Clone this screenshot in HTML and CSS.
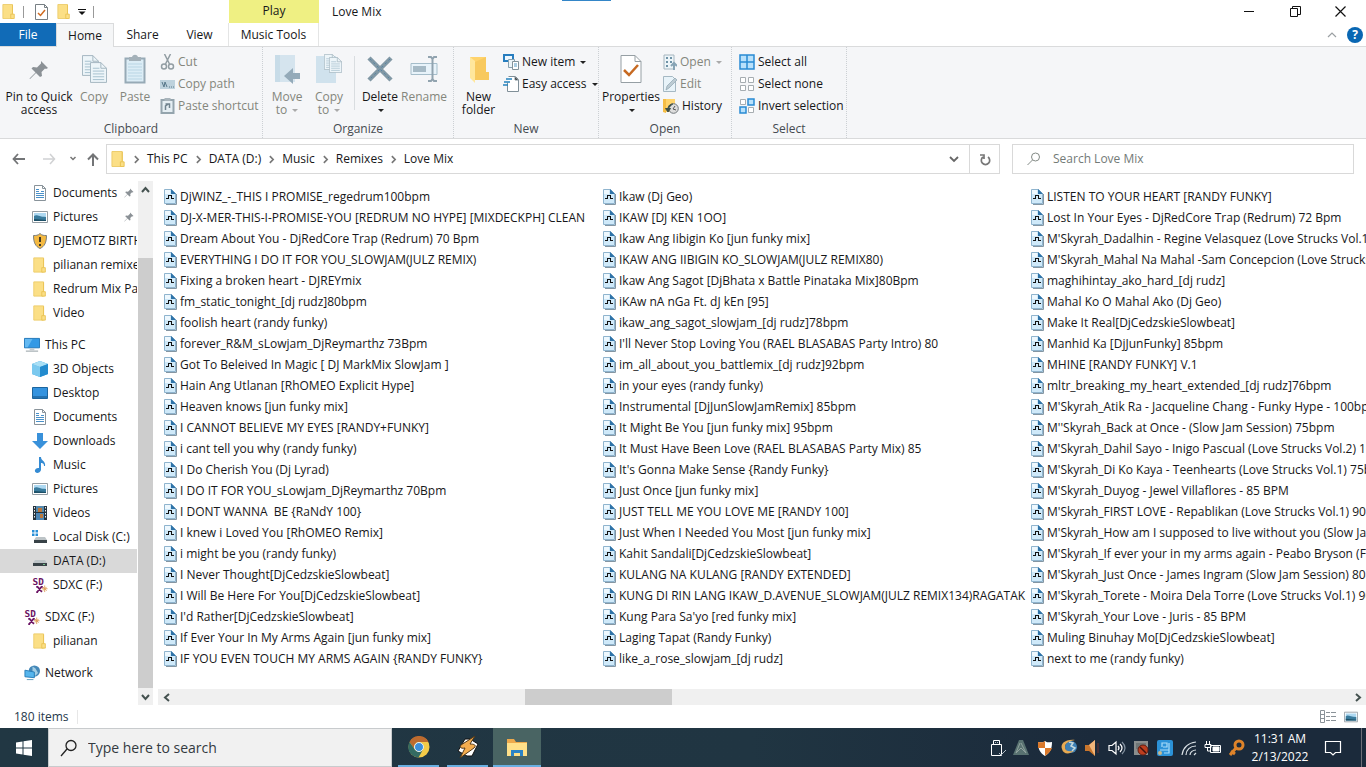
FILE: index.html
```html
<!DOCTYPE html>
<html lang="en">
<head>
<meta charset="utf-8">
<title>Love Mix</title>
<link rel="stylesheet" href="styles.css">
</head>
<body>
<svg class="defs" aria-hidden="true">
  <symbol id="folder" viewBox="0 0 16 18"><path d="M1 1h11v16H1z" fill="#fbdf86" stroke="#eccb69"/><path d="M10 12h4v5h-4z" fill="#fbdf86" stroke="#e9c252"/><path d="M12 1.5v10" stroke="#e9c252"/></symbol>
  <symbol id="file" viewBox="0 0 14 16"><path d="M3 15.500h10.500V5" fill="none" stroke="#8496a3"/><path d="M1.500.500h7l4 4v10h-11z" fill="#cfe9f9" stroke="#8fb4ce"/><path d="M2 1h5v4H2z" fill="#eef8fe"/><path d="M8 0l5 5H8z" fill="#2f73a8"/><path d="M3 9.500h3M5.500 9.500v-3M5 6.500h4M8.500 6.500v3M8 9.500h3" fill="none" stroke="#111"/></symbol>
  <symbol id="doc" viewBox="0 0 16 16"><path d="M2.500.5h8l3 3v12h-11z" fill="#fff" stroke="#89939a"/><path d="M10.500.5v3h3" fill="none" stroke="#89939a"/><path d="M4 4.500h3M4 6.500h3M4 8.500h8M4 10.500h8M4 12.500h8M9 6.500h3" stroke="#4a91c9"/></symbol>
  <symbol id="pic" viewBox="0 0 16 12"><path d="M.5.500h15v11H.5z" fill="#fff" stroke="#949da3"/><path d="M2 2h12v8H2z" fill="#aed9f2"/><path d="M2 5c3-2 5 1 12 1v4H2z" fill="#397b9d"/><path d="M2 8l12 1v1H2z" fill="#1d5067"/></symbol>
  <symbol id="pin" viewBox="0 0 20 20"><path d="M12 1l7 7-2 1-1-.5-3.500 3.500.5 4-2 1-4-4-6 6-.500-.500 6-6-4-4 1.500-1.500 4 .5 4-4z" fill="#8b9196"/></symbol>
  <symbol id="pc" viewBox="0 0 17 15"><path d="M.5.500h16v10H.5z" fill="#3399e5" stroke="#2176b8"/><path d="M1 1h8L4 10H1z" fill="#64b9f2"/><path d="M6 11h5v2H6z" fill="#c2cbd0"/><path d="M2 14h13" stroke="#8c979d"/></symbol>
  <symbol id="sd" viewBox="0 0 16 17"><text x="0" y="8" class="sd-mark">SD</text><path d="M5 10l5 6M10 10l-5 6M4 10.500h2M9 10.500h2M4 16h2" stroke="#6b1464" stroke-width="1.800"/><path d="M13 9v7M10 12.500h6M11 10.500l4 4M15 10.500l-4 4" stroke="#dd9d5b"/></symbol>
  <symbol id="drive" viewBox="0 0 16 12"><path d="M3 5h10l2 3H1z" fill="#bdc4c7"/><path d="M1 8h14v3H1z" fill="#384247"/><path d="M11 9.500h2" stroke="#74c08c"/></symbol>
  <symbol id="chev" viewBox="0 0 10 10"><path d="M3.500 2L6.500 5 3.500 8" fill="none" stroke="currentColor" stroke-width="1.500"/></symbol>
  <symbol id="sheet" viewBox="0 0 18 22"><path d="M.5.500h11l6 6v15H.5z" fill="#edf5f9" stroke="#a2b4be"/><path d="M11.500.5v6h6" fill="none" stroke="#a2b4be"/><path d="M3 6.500h7M3 9.500h12M3 12.500h12M3 15.500h12M3 18.500h12" stroke="#a4bfcd"/></symbol>
</svg>
<div class="app">
<header class="titlebar">
  <div class="quick">
    <svg width="14" height="17"><use href="#folder"/></svg><i class="bar"></i>
    <svg class="qa-check" width="13" height="16" viewBox="0 0 13 16"><path d="M.5.500h9l3 3v12H.5z" fill="#fff" stroke="#777f84"/><path d="M9.500.5v3h3" fill="none" stroke="#777f84"/><path d="M3 9l2.500 2.500L10 6" fill="none" stroke="#d06b20" stroke-width="1.500"/></svg>
    <svg class="qa-folder" width="14" height="17"><use href="#folder"/></svg>
    <svg width="8" height="6" viewBox="0 0 8 6"><path d="M0 .5h8" stroke="#111"/><path d="M.5 2.500h7L4 6z" fill="#111"/></svg><i class="bar"></i>
  </div>
  <div class="context">Play</div>
  <h1>Love Mix</h1>
  <i class="drag-line"></i>
  <div class="controls">
    <button aria-label="Minimize"><svg width="11" height="11"><path d="M0 5.500h10" stroke="#111"/></svg></button>
    <button aria-label="Restore"><svg width="11" height="11" fill="none" stroke="#111"><path d="M.5 2.500h7v8h-7zM2.500 2.500v-2h8v8h-3"/></svg></button>
    <button aria-label="Close"><svg width="11" height="11"><path d="M.5.500l10 10M10.500.5l-10 10" stroke="#111" stroke-width="1.200"/></svg></button>
  </div>
</header>
<nav class="tabs">
  <button class="file-tab">File</button><button class="active">Home</button><button>Share</button><button>View</button><button class="music">Music Tools</button>
  <div class="help"><svg width="10" height="6"><path d="M1 5l4-4 4 4" fill="none" stroke="#9ba0a3" stroke-width="1.200"/></svg><button class="help-button" aria-label="Help">?</button></div>
</nav>
<section class="ribbon">
  <div class="group clipboard"><div class="tools">
    <button class="big pin-button"><svg width="22" height="30" viewBox="-1 -6 22 30"><use href="#pin" width="20" height="20"/></svg>Pin to Quick<br>access</button>
    <button class="big off"><svg width="26" height="30"><use href="#sheet" x="1" y="1" width="17" height="21"/><use href="#sheet" x="9" y="8" width="17" height="21"/></svg>Copy</button>
    <button class="big off"><svg width="22" height="30" viewBox="0 0 22 30"><path d="M1.500 4.500h19v24h-19z" fill="#dcedf6" stroke="#97aab6" stroke-width="2"/><path d="M5 3h3c1-3 5-3 6 0h3v4H5z" fill="#a4b1b9"/><path d="M4 10h14M4 13h14M4 16h14M4 19h14M4 22h14M4 25h14" stroke="#b9d5e4"/></svg>Paste</button>
    <div class="smalls off">
      <button><svg width="14" height="16" viewBox="0 0 14 16" fill="none" stroke="#929da3" stroke-width="1.500"><path d="M4 0l5 10M10 0L5 10"/><circle cx="3.500" cy="12.500" r="2.500"/><circle cx="10.500" cy="12.500" r="2.500"/></svg>Cut</button>
      <button><svg width="15" height="9" viewBox="0 0 15 9"><path d="M0 0h15v9H0z" fill="#bed2dd"/><path d="M2 2l2 5 1-5 2 5M9 7h1M11 7h1M13 7h1" stroke="#58788a" fill="none"/></svg>Copy path</button>
      <button><svg width="14" height="16" viewBox="0 0 14 16"><path d="M1 2h12v13H1z" fill="#e5eef3" stroke="#94a4ad" stroke-width="2"/><path d="M4 0h6v3H4z" fill="#a8b4bb"/><path d="M5 12V8l3-2M5 6h4v4" stroke="#70838e" stroke-width="1.500" fill="none"/></svg>Paste shortcut</button>
    </div></div><h2>Clipboard</h2>
  </div>
  <div class="group organize"><div class="tools">
    <button class="big off"><svg width="28" height="30" viewBox="0 0 28 30"><path d="M2 1h20v27H2z" fill="#d5e4ee"/><path d="M2 1h5v27H2z" fill="#c8dce8"/><path d="M27 19h-7v-5l-9 8 9 8v-5h7z" fill="#94aab9"/></svg>Move<br>to <i class="caret"></i></button>
    <button class="big off"><svg width="28" height="30" viewBox="0 0 28 30"><path d="M1 2h20v27H1z" fill="#d0e2ed"/><use href="#sheet" x="9" y="0" width="13" height="16"/><use href="#sheet" x="14" y="3" width="13" height="16"/></svg>Copy<br>to <i class="caret"></i></button>
    <i class="divider"></i>
    <button class="big"><svg width="26" height="30"><path d="M2 4l22 22M24 4L2 26" stroke="#8198a5" stroke-width="4.500"/><path d="M3 5l20 20M23 5L3 25" stroke="#5583a5" stroke-dasharray="2 3"/></svg>Delete<br><i class="caret"></i></button>
    <button class="big off rename"><svg width="28" height="30" fill="none"><path d="M1 9.500h26v11H1z" fill="#e8f3fa" stroke="#a5bdca"/><path d="M3 12h13v6H3z" fill="#a6bac6"/><path d="M18 3h3l1.500 2L24 3h3M22.500 4v22M18 27h3l1.500-2 1.500 2h3" stroke="#91a3af" stroke-width="2"/></svg>Rename</button>
  </div><h2>Organize</h2></div>
  <div class="group new"><div class="tools">
    <button class="big"><svg width="22" height="30" viewBox="0 0 22 30"><path d="M2 3h16v21H2z" fill="#ffd36c"/><path d="M2 3l5 4v22l-5-5z" fill="#ffe79c"/><path d="M18 3v15h3v8H7V8z" fill="#f8c95e"/></svg>New<br>folder</button>
    <div class="smalls"><button><svg width="16" height="16" viewBox="0 0 16 16"><path d="M1 1h9v6H1z" fill="#edf8ff" stroke="#277dbf" stroke-width="2"/><path d="M5.500 5.500h6v8h-6z" fill="#edf5f9" stroke="#87a1af"/><path d="M9.500 7.500h6v8h-6z" fill="#fff" stroke="#839299"/><path d="M11 10h3M11 12h3" stroke="#579bc3"/></svg>New item<i class="caret"></i></button>
      <button><svg width="16" height="16" viewBox="0 0 16 16"><path d="M5.500.5h7l3 3v12h-11v-9" fill="#fff" stroke="#808f98"/><path d="M12 1v3h3" stroke="#808f98"/><path d="M3 3h6M1 6h6M0 9h5" stroke="#2482bd" stroke-width="1.500"/></svg>Easy access<i class="caret"></i></button></div>
  </div><h2>New</h2></div>
  <div class="group open"><div class="tools">
    <button class="big"><svg width="22" height="30" viewBox="0 0 22 30"><path d="M1 1.500h14l6 6v21H1z" fill="#fff" stroke="#969fa4"/><path d="M15 1.500v6h6" fill="none" stroke="#969fa4"/><path d="M4 16l5 5 9-10" fill="none" stroke="#c76a22" stroke-width="2.500"/></svg>Properties<br><i class="caret"></i></button>
    <div class="smalls"><button class="off"><svg width="14" height="16" viewBox="0 0 14 16"><path d="M1 1h10v14H1z" fill="#edf5f9" stroke="#a6b6bf"/><path d="M3 4h2M3 8h2M3 12h2M7 4h2M7 8h2" stroke="#6f93a7" stroke-width="2"/><path d="M11 16v-6M8 12l3-3 3 3" fill="none" stroke="#87a4b5" stroke-width="2"/></svg>Open<i class="caret"></i></button>
      <button class="off"><svg width="14" height="16" viewBox="0 0 14 16"><path d="M.5.500h9l3 3v12H.5z" fill="#e8f3f9" stroke="#a5b8c3"/><path d="M3 14l1-4 8-8 2 2-8 8z" fill="#bccbd3" stroke="#91a6b2" stroke-width=".7"/></svg>Edit</button>
      <button class="history"><svg width="16" height="16" viewBox="0 0 16 16"><path d="M0 1h12v13H0z" fill="#ffd36b"/><path d="M0 1h3v14l-3-1z" fill="#f5bd45"/><circle cx="10.500" cy="10.500" r="4.800" fill="#ddd" stroke="#71787c"/><path d="M12 8l-2 3 3 1" fill="none" stroke="#555"/><path d="M10 6c-4 0-5 3-5 5M2.500 10.500L5 14l2.500-3.500z" fill="#3f5048" stroke="#3f5048"/></svg>History</button></div>
  </div><h2>Open</h2></div>
  <div class="group select"><div class="smalls tools">
    <button><svg width="16" height="16"><path d="M1 1h14v14H1zM8 1v14M1 8h14" fill="#b9e1fb" stroke="#288bd3" stroke-width="1.500"/></svg>Select all</button>
    <button><svg width="16" height="16"><path d="M1.500 1.500h5v5h-5zM9.500 1.500h5v5h-5zM1.500 9.500h5v5h-5zM9.500 9.500h5v5h-5z" fill="#fff" stroke="#a6adb1"/></svg>Select none</button>
    <button><svg width="16" height="16"><path d="M1.500 1.500h5v5h-5zM9.500 9.500h5v5h-5z" fill="#fff" stroke="#a6adb1"/><path d="M9 1h6v6H9zM1 9h6v6H1z" fill="#b9e1fb" stroke="#288bd3" stroke-width="1.500"/></svg>Invert selection</button>
  </div><h2>Select</h2></div>
</section>
<section class="address">
  <div class="arrows">
    <button aria-label="Back"><svg width="14" height="12"><path d="M13 6H2M6 1L1.500 6 6 11" fill="none" stroke="#737577" stroke-width="1.800"/></svg></button>
    <button aria-label="Forward"><svg width="14" height="12"><path d="M1 6h11M8 1l4.500 5L8 11" fill="none" stroke="#d0d1d3" stroke-width="1.500"/></svg></button>
    <button class="recent" aria-label="Recent"><svg width="8" height="6"><path d="M1.500 1L4 3.500 6.500 1" fill="none" stroke="#777" stroke-width="1.500"/></svg></button>
    <button class="up" aria-label="Up"><svg width="12" height="13"><path d="M6 13V2M1 6.500l5-5 5 5" fill="none" stroke="#737577" stroke-width="2"/></svg></button>
  </div>
  <div class="path"><svg width="15" height="18"><use href="#folder"/></svg>
    <svg class="ch"><use href="#chev"/></svg><a href="#pc">This PC</a><svg class="ch"><use href="#chev"/></svg><a href="#data">DATA (D:)</a><svg class="ch"><use href="#chev"/></svg><a href="#music">Music</a><svg class="ch"><use href="#chev"/></svg><a href="#remixes">Remixes</a><svg class="ch"><use href="#chev"/></svg><a href="#love">Love Mix</a>
    <button class="drop" aria-label="Previous locations"><svg width="10" height="7"><path d="M1 1l4 4 4-4" fill="none" stroke="#666" stroke-width="1.800"/></svg></button>
    <button class="refresh" aria-label="Refresh"><svg width="12" height="13" fill="none" stroke="#777" stroke-width="1.700"><path d="M9 4a4.200 4.200 0 1 1-5 0M1 2h4v4"/></svg></button>
  </div>
  <label class="search"><svg width="14" height="14" fill="none" stroke="#838a86"><circle cx="8.500" cy="5" r="4"/><path d="M5.500 8L.5 13"/></svg><input type="search" placeholder="Search Love Mix" aria-label="Search Love Mix"></label>
</section>
<main class="body">
  <nav class="tree">
    <a href="#a"><svg class="ic"><use href="#doc"/></svg><span>Documents</span><svg class="tack"><use href="#pin"/></svg></a>
    <a href="#a"><svg class="ic"><use href="#pic"/></svg><span>Pictures</span><svg class="tack"><use href="#pin"/></svg></a>
    <a href="#a"><svg class="ic" viewBox="0 0 16 16"><path d="M8 .5c2 2 4 2 6.500 2 0 7-2 11-6.500 13C3.500 13.500 1.500 9.500 1.500 2.500 4 2.500 6 2.500 8 .5z" fill="#f4b941" stroke="#7c7f7d"/><path d="M8 4v5M8 11v2" stroke="#222" stroke-width="1.700"/></svg>DJEMOTZ BIRTHDAY</a>
    <a href="#a"><svg class="ic"><use href="#folder"/></svg>pilianan remixes</a>
    <a href="#a"><svg class="ic"><use href="#folder"/></svg>Redrum Mix Party</a>
    <a href="#a"><svg class="ic"><use href="#folder"/></svg>Video</a>
    <a class="root" href="#pc"><svg class="ic"><use href="#pc"/></svg>This PC</a>
    <a href="#a"><svg class="ic" viewBox="0 0 16 16"><path d="M0 3l8-3 8 3v10l-8 3-8-3z" fill="#369fdc"/><path d="M0 3l8 3v10l-8-3z" fill="#7bc9ef"/><path d="M0 3l8-3 8 3-8 3z" fill="#a9dff5"/><path d="M8 6l8-3v10l-8 3z" fill="#238bce"/></svg>3D Objects</a>
    <a href="#a"><svg class="ic" viewBox="0 0 16 12"><path d="M.5.500h15v11H.5z" fill="#3493df" stroke="#1c659e"/><path d="M1 10h14" stroke="#145180"/></svg>Desktop</a>
    <a href="#a"><svg class="ic"><use href="#doc"/></svg>Documents</a>
    <a href="#a"><svg class="ic" viewBox="0 0 16 16"><path d="M5 0h6v8h5l-8 8-8-8h5z" fill="#3991da"/></svg>Downloads</a>
    <a href="#a"><svg class="ic" viewBox="0 0 16 16"><path d="M7 0h2c0 4 5 4 4 9h-1c0-3-2-3-3-3v7c-1 4-7 4-6 0 1-2 3-2 4-2z" fill="#348bd3"/></svg>Music</a>
    <a href="#a"><svg class="ic"><use href="#pic"/></svg>Pictures</a>
    <a href="#a"><svg class="ic" viewBox="0 0 16 16"><path d="M1 1h14v14H1z" fill="#26323c"/><path d="M4 1h8v6H4z" fill="#5589ad"/><path d="M4 8h8v7H4z" fill="#4d86b5"/><path d="M6 3h4v4H6zM8 9h3v4H8z" fill="#ba783c"/><path d="M2.500 2v12M13.500 2v12" stroke="#edf0f1" stroke-dasharray="1.500 1.500"/></svg>Videos</a>
    <a href="#a"><svg class="ic" viewBox="0 0 16 14"><path d="M0 0h2.500v2.500H0zM3.500 0H6v2.500H3.500zM0 3.500h2.500V6H0zM3.500 3.500H6V6H3.500z" fill="#278ed7"/><path d="M4 7h9l2 3H2z" fill="#bdc4c7"/><path d="M2 10h13v3H2z" fill="#384247"/></svg>Local Disk (C:)</a>
    <a class="current" href="#data"><svg class="ic"><use href="#drive"/></svg>DATA (D:)</a>
    <a href="#a"><svg class="ic"><use href="#sd"/></svg>SDXC (F:)</a>
    <a class="root" href="#a"><svg class="ic"><use href="#sd"/></svg>SDXC (F:)</a>
    <a href="#a"><svg class="ic"><use href="#folder"/></svg>pilianan</a>
    <a class="root" href="#a"><svg class="ic" viewBox="0 0 17 16"><circle cx="11" cy="6" r="6" fill="#4588b8"/><path d="M9 1l3 2 3 5-3 3-3-3z" fill="#a3cee4"/><path d="M1 5l10 2v6l-10-1z" fill="#55b5ed" stroke="#277db8"/><path d="M3 15h7" stroke="#5d9cbd"/></svg>Network</a>
  </nav>
  <div class="vscroll"><button aria-label="Scroll up"><svg width="9" height="8"><path d="M1 6l3.500-4L8 6" fill="none" stroke="#455250" stroke-width="2"/></svg></button><i></i><button aria-label="Scroll down"><svg width="9" height="8"><path d="M1 2l3.500 4L8 2" fill="none" stroke="#455250" stroke-width="2"/></svg></button></div>
  <section class="content">
    <div class="files">
      <ul>
        <li><svg><use href="#file"/></svg>DjWINZ_-_THIS I PROMISE_regedrum100bpm</li>
        <li><svg><use href="#file"/></svg>DJ-X-MER-THIS-I-PROMISE-YOU [REDRUM NO HYPE] [MIXDECKPH] CLEAN</li>
        <li><svg><use href="#file"/></svg>Dream About You - DjRedCore Trap (Redrum) 70 Bpm</li>
        <li><svg><use href="#file"/></svg>EVERYTHING I DO IT FOR YOU_SLOWJAM(JULZ REMIX)</li>
        <li><svg><use href="#file"/></svg>Fixing a broken heart - DJREYmix</li>
        <li><svg><use href="#file"/></svg>fm_static_tonight_[dj rudz]80bpm</li>
        <li><svg><use href="#file"/></svg>foolish heart (randy funky)</li>
        <li><svg><use href="#file"/></svg>forever_R&amp;M_sLowjam_DjReymarthz 73Bpm</li>
        <li><svg><use href="#file"/></svg>Got To Beleived In Magic [ DJ MarkMix SlowJam ]</li>
        <li><svg><use href="#file"/></svg>Hain Ang Utlanan [RhOMEO Explicit Hype]</li>
        <li><svg><use href="#file"/></svg>Heaven knows [jun funky mix]</li>
        <li><svg><use href="#file"/></svg>I CANNOT BELIEVE MY EYES [RANDY+FUNKY]</li>
        <li><svg><use href="#file"/></svg>i cant tell you why (randy funky)</li>
        <li><svg><use href="#file"/></svg>I Do Cherish You (Dj Lyrad)</li>
        <li><svg><use href="#file"/></svg>I DO IT FOR YOU_sLowjam_DjReymarthz 70Bpm</li>
        <li><svg><use href="#file"/></svg>I DONT WANNA&nbsp; BE {RaNdY 100}</li>
        <li><svg><use href="#file"/></svg>I knew i Loved You [RhOMEO Remix]</li>
        <li><svg><use href="#file"/></svg>i might be you (randy funky)</li>
        <li><svg><use href="#file"/></svg>I Never Thought[DjCedzskieSlowbeat]</li>
        <li><svg><use href="#file"/></svg>I Will Be Here For You[DjCedzskieSlowbeat]</li>
        <li><svg><use href="#file"/></svg>I'd Rather[DjCedzskieSlowbeat]</li>
        <li><svg><use href="#file"/></svg>If Ever Your In My Arms Again [jun funky mix]</li>
        <li><svg><use href="#file"/></svg>IF YOU EVEN TOUCH MY ARMS AGAIN {RANDY FUNKY}</li>
      </ul>
      <ul>
        <li><svg><use href="#file"/></svg>Ikaw (Dj Geo)</li>
        <li><svg><use href="#file"/></svg>IKAW [DJ KEN 1OO]</li>
        <li><svg><use href="#file"/></svg>Ikaw Ang Iibigin Ko [jun funky mix]</li>
        <li><svg><use href="#file"/></svg>IKAW ANG IIBIGIN KO_SLOWJAM(JULZ REMIX80)</li>
        <li><svg><use href="#file"/></svg>Ikaw Ang Sagot [DjBhata x Battle Pinataka Mix]80Bpm</li>
        <li><svg><use href="#file"/></svg>iKAw nA nGa Ft. dJ kEn [95]</li>
        <li><svg><use href="#file"/></svg>ikaw_ang_sagot_slowjam_[dj rudz]78bpm</li>
        <li><svg><use href="#file"/></svg>I'll Never Stop Loving You (RAEL BLASABAS Party Intro) 80</li>
        <li><svg><use href="#file"/></svg>im_all_about_you_battlemix_[dj rudz]92bpm</li>
        <li><svg><use href="#file"/></svg>in your eyes (randy funky)</li>
        <li><svg><use href="#file"/></svg>Instrumental [DjJunSlowJamRemix] 85bpm</li>
        <li><svg><use href="#file"/></svg>It Might Be You [jun funky mix] 95bpm</li>
        <li><svg><use href="#file"/></svg>It Must Have Been Love (RAEL BLASABAS Party Mix) 85</li>
        <li><svg><use href="#file"/></svg>It's Gonna Make Sense {Randy Funky}</li>
        <li><svg><use href="#file"/></svg>Just Once [jun funky mix]</li>
        <li><svg><use href="#file"/></svg>JUST TELL ME YOU LOVE ME [RANDY 100]</li>
        <li><svg><use href="#file"/></svg>Just When I Needed You Most [jun funky mix]</li>
        <li><svg><use href="#file"/></svg>Kahit Sandali[DjCedzskieSlowbeat]</li>
        <li><svg><use href="#file"/></svg>KULANG NA KULANG [RANDY EXTENDED]</li>
        <li><svg><use href="#file"/></svg>KUNG DI RIN LANG IKAW_D.AVENUE_SLOWJAM(JULZ REMIX134)RAGATAK</li>
        <li><svg><use href="#file"/></svg>Kung Para Sa'yo [red funky mix]</li>
        <li><svg><use href="#file"/></svg>Laging Tapat (Randy Funky)</li>
        <li><svg><use href="#file"/></svg>like_a_rose_slowjam_[dj rudz]</li>
      </ul>
      <ul>
        <li><svg><use href="#file"/></svg>LISTEN TO YOUR HEART [RANDY FUNKY]</li>
        <li><svg><use href="#file"/></svg>Lost In Your Eyes - DjRedCore Trap (Redrum) 72 Bpm</li>
        <li><svg><use href="#file"/></svg>M'Skyrah_Dadalhin - Regine Velasquez (Love Strucks Vol.1)</li>
        <li><svg><use href="#file"/></svg>M'Skyrah_Mahal Na Mahal -Sam Concepcion (Love Strucks Vol.1)</li>
        <li><svg><use href="#file"/></svg>maghihintay_ako_hard_[dj rudz]</li>
        <li><svg><use href="#file"/></svg>Mahal Ko O Mahal Ako (Dj Geo)</li>
        <li><svg><use href="#file"/></svg>Make It Real[DjCedzskieSlowbeat]</li>
        <li><svg><use href="#file"/></svg>Manhid Ka [DjJunFunky] 85bpm</li>
        <li><svg><use href="#file"/></svg>MHINE [RANDY FUNKY] V.1</li>
        <li><svg><use href="#file"/></svg>mltr_breaking_my_heart_extended_[dj rudz]76bpm</li>
        <li><svg><use href="#file"/></svg>M'Skyrah_Atik Ra - Jacqueline Chang - Funky Hype - 100bpm</li>
        <li><svg><use href="#file"/></svg>M''Skyrah_Back at Once - (Slow Jam Session) 75bpm</li>
        <li><svg><use href="#file"/></svg>M'Skyrah_Dahil Sayo - Inigo Pascual (Love Strucks Vol.2) 100bpm</li>
        <li><svg><use href="#file"/></svg>M'Skyrah_Di Ko Kaya - Teenhearts (Love Strucks Vol.1) 75bpm</li>
        <li><svg><use href="#file"/></svg>M'Skyrah_Duyog - Jewel Villaflores - 85 BPM</li>
        <li><svg><use href="#file"/></svg>M'Skyrah_FIRST LOVE - Repablikan (Love Strucks Vol.1) 90bpm</li>
        <li><svg><use href="#file"/></svg>M'Skyrah_How am I supposed to live without you (Slow Jam Session)</li>
        <li><svg><use href="#file"/></svg>M'Skyrah_If ever your in my arms again - Peabo Bryson (Funky Hype)</li>
        <li><svg><use href="#file"/></svg>M'Skyrah_Just Once - James Ingram (Slow Jam Session) 80bpm</li>
        <li><svg><use href="#file"/></svg>M'Skyrah_Torete - Moira Dela Torre (Love Strucks Vol.1) 90bpm</li>
        <li><svg><use href="#file"/></svg>M'Skyrah_Your Love - Juris - 85 BPM</li>
        <li><svg><use href="#file"/></svg>Muling Binuhay Mo[DjCedzskieSlowbeat]</li>
        <li><svg><use href="#file"/></svg>next to me (randy funky)</li>
      </ul>
    </div>
    <div class="hscroll"><button aria-label="Scroll left"><svg width="8" height="9"><path d="M6 1L2 4.500 6 8" fill="none" stroke="#455250" stroke-width="2"/></svg></button><i></i><button aria-label="Scroll right"><svg width="8" height="9"><path d="M2 1l4 3.500L2 8" fill="none" stroke="#455250" stroke-width="2"/></svg></button></div>
  </section>
</main>
<footer class="status"><span>180 items</span><i></i>
  <button aria-label="Details view"><svg width="16" height="13"><path d="M.5.500h4v12h-4zM.5 4.500h4M.5 8.500h4M6 2.500h4M11 2.500h5M6 6.500h4M11 6.500h5M6 10.500h4M11 10.500h5" fill="none" stroke="#8a9298"/></svg></button>
  <button aria-label="Large icons"><svg width="14" height="12"><use href="#pic"/></svg></button></footer>
<footer class="taskbar">
  <button class="start" aria-label="Start"><svg width="16" height="16" fill="#fff"><path d="M0 2.500L6.500 1.500v6H0zM7.500 1.300L16 0v7.500H7.500zM0 8.500h6.500v6L0 13.500zM7.500 8.500H16V16l-8.500-1.300z"/></svg></button>
  <label class="task-search"><svg width="18" height="18" fill="none" stroke="#222" stroke-width="1.300"><circle cx="11" cy="6.500" r="5"/><path d="M7 10l-6 7"/></svg><input type="text" placeholder="Type here to search" aria-label="Type here to search"></label>
  <div class="pinned">
    <button aria-label="Chrome"><svg width="22" height="22" viewBox="0 0 22 22"><circle cx="11" cy="11" r="10.500" fill="#f4cb48"/><path d="M1.500 6a10.500 10.500 0 0 1 19 0H11a5 5 0 0 0-4.500 7z" fill="#bd6b2f"/><path d="M1.500 6a10.500 10.500 0 0 0 9 15.500l4-7A5 5 0 0 1 6.500 13z" fill="#346b62"/><circle cx="11" cy="11" r="4.500" fill="#3c8fdc" stroke="#e8eff1"/></svg></button>
    <button aria-label="Music player"><svg width="22" height="22" viewBox="0 0 22 22"><path d="M8 3h5l8 5-6 12h-5L1 15z" fill="#fff" stroke="#111"/><path d="M18 0L4 9c-2 2 0 4 4 3L3 22l14-10c3-3 0-4-4-4z" fill="#f4ad4f" stroke="#513819"/></svg></button>
    <button class="explorer" aria-label="File Explorer"><svg width="20" height="18" viewBox="0 0 20 18"><path d="M0 1h7l2 3h11v13H0z" fill="#eda94c"/><path d="M0 5h20v13H0z" fill="#ffe089"/><path d="M4 18v-6h12v6h-3v-3H7v3z" fill="#2b83c5"/></svg></button>
  </div>
  <div class="tray">
    <svg viewBox="0 0 18 18" fill="none" stroke="#fff"><path d="M5.500 1.500h6v4h-6zM3.500 5.500h10v11h-10z"/><path d="M7 3.500h1M9 3.500h1M11 14l2 2 5-5" stroke="#b5c0c8"/></svg>
    <svg viewBox="0 0 18 18"><path d="M7 1h4l6 15H1z" fill="#587271"/><path d="M8 4l-4 10 5-5 5 5L9 4" fill="none" stroke="#91a39f"/></svg>
    <svg viewBox="0 0 18 18"><path d="M9 2c2 2 4 1 7 1 0 7-2 11-7 14C4 14 2 10 2 3c3 0 5 1 7-1z" fill="#fff"/><path d="M9 2v7H2V3c3 0 5 1 7-1zM9 9h7c-1 3-4 6-7 8z" fill="#d9782b"/></svg>
    <svg viewBox="0 0 18 18"><circle cx="11" cy="8" r="6" fill="#3d7fb4"/><path d="M9 3l4 1-2 3 4 2-3 3" stroke="#c5d8dc" stroke-width="1.500" fill="none"/><path d="M15 1C5 0 0 5 2 10c1 5 7 6 12 2-6 1-9 0-9-4s4-6 10-7z" fill="#e7aa52"/></svg>
    <svg viewBox="0 0 18 18"><path d="M1 6h4l6-5v16l-6-5H1z" fill="#c8752c"/><path d="M5 6l6-5v16z" fill="#f1b57a"/><path d="M14 4v10" stroke="#6c3030"/></svg>
    <svg viewBox="0 0 18 18" fill="none" stroke="#fff" stroke-width="1.200"><path d="M1 6.500h3l4-3.500v12l-4-3.500H1zM10 7q2 2 0 4M12 5q4 4 0 8"/><path d="M14 3q6 6 0 12" stroke="#8492a0"/></svg>
    <svg viewBox="0 0 18 18"><path d="M2 2h14v14H2z" fill="#8a8e8e"/><path d="M4 4h10v6H4z" fill="#6f7575"/><circle cx="11" cy="11" r="5" fill="#bc3e1f" stroke="#621d12"/><path d="M8 8l6 6" stroke="#41120e" stroke-width="1.500"/></svg>
    <svg viewBox="0 0 18 18"><rect x="1" y="1" width="16" height="16" rx="2" fill="#2b92d8"/><path d="M4 11h9V4M7 8h4V4H6v4M13 4v10H8" fill="none" stroke="#a9dcfa" stroke-width="1.200"/><circle cx="4" cy="14" r="2" fill="#c6b88e"/></svg>
    <svg viewBox="0 0 18 18" fill="none" stroke="#d9e0e5" stroke-width="1.200"><path d="M2 16C3 9 8 4 16 3M6 16c0-5 4-9 10-9M10 16c0-3 3-5 6-5M14 16l2-2"/></svg>
    <svg viewBox="0 0 18 18" fill="none" stroke="#fff"><path d="M6.500 6.500h10v7h-10z"/><path d="M9 8h6v4H9z" fill="#fff"/><path d="M2.500 2v3M5.500 2v3M1 5.500h6v3H1zM3.500 8v4h3"/></svg>
    <svg viewBox="0 0 18 18" fill="none" stroke="#de832a" stroke-width="3"><circle cx="11" cy="6" r="4"/><path d="M8 9l-6 7M3 12l4 3"/></svg>
  </div>
  <time><span>11:31 AM</span><span>2/13/2022</span></time>
  <button class="notice" aria-label="Notifications"><svg width="18" height="18"><path d="M1.500 2.500h15v11h-5L9 16l-2.500-2.500h-5z" fill="none" stroke="#fff" stroke-width="1.200"/></svg></button>
  <i class="peek"></i>
</footer>
</div>
</body>
</html>
```
FILE: styles.css
```css
* { box-sizing: border-box; }
body { margin: 0; background: #fff; color: #171719; font: 12px/16px "Open Sans", "Noto Sans", sans-serif; }
button { border: 0; background: none; color: inherit; font: inherit; padding: 0; }
button, label, a { display: flex; align-items: center; }
a { color: inherit; text-decoration: none; }
svg { display: block; flex: none; }
h1, h2 { margin: 0; font: inherit; }
.defs { position: absolute; width: 0; height: 0; }
.sd-mark { font: 700 10px "DejaVu Sans Mono", monospace; fill: #6b1464; }
.app { display: flex; flex-direction: column; height: 100vh; min-height: 700px; overflow: hidden; }

.titlebar { display: flex; align-items: center; height: 23px; flex: none; }
.quick { width: 229px; display: flex; align-items: center; gap: 7px; padding-left: 2px; }
.quick .bar { width: 1px; height: 12px; background: #999; }
.qa-check { margin-left: 4px; }
.qa-folder { margin-left: 2px; }
.context { width: 90px; height: 23px; background: #eff083; text-align: center; line-height: 21px; }
.titlebar h1 { width: 243px; padding-left: 13px; }
.drag-line { width: 49px; height: 1px; align-self: flex-start; background: #3486c8; }
.controls { display: flex; margin-left: auto; }
.controls button { width: 46px; height: 21px; justify-content: center; }
.controls button:last-child { padding-right: 1px; margin-right: 2px; }

.tabs { display: flex; height: 24px; flex: none; border-bottom: 1px solid #dadbdc; }
.tabs > button { width: 57px; justify-content: center; }
.tabs > .file-tab { width: 56px; background: #116bb7; color: #fff; }
.tabs > .active { width: 58px; height: 24px; background: #f5f6f7; border: 1px solid #dadbdc; border-bottom: 0; }
.tabs > .music { width: 91px; border: solid #e4e5e5; border-width: 0 1px; }
.help { display: flex; align-items: center; gap: 10px; margin-left: auto; padding-right: 3px; }
.help .help-button { width: 16px; height: 16px; justify-content: center; border-radius: 8px; background: #0967b3; color: #fff; font-weight: 700; }

.ribbon { display: flex; height: 92px; flex: none; background: #f5f6f8; border-bottom: 1px solid #d9dadb; }
.group { display: flex; flex-direction: column; justify-content: space-between; padding: 6px 0 1px; border-right: 1px dotted #ccd0d4; }
.group h2 { text-align: center; color: #454b51; }
.tools { display: flex; align-items: flex-start; }
.clipboard { width: 263px; }
.organize { width: 191px; }
.new { width: 145px; }
.open { width: 133px; }
.select { width: 115px; }
.big { width: 42px; line-height: 13px; white-space: nowrap; display: block; text-align: center; }
.big svg { margin: 1px auto 6px; }
.pin-button { width: 78px; }
.clipboard .big + .big { width: 32px; margin-right: 9px; }
.off { color: #84867c; }
.smalls button { height: 22px; gap: 3px; white-space: nowrap; }
.smalls { display: block; margin-top: -2px; }
.clipboard .smalls svg { width: 15px; }
.caret { display: inline-block; width: 0; border: 3px solid transparent; border-top-color: #222; border-bottom: 0; margin-left: 2px; vertical-align: middle; }
.off .caret { border-top-color: #aaa; }
.organize .tools { padding-left: 3px; }
.divider { width: 1px; height: 54px; margin: 3px 4px; background: #d9dde0; }
.organize .rename { width: 46px; }
.new .big { width: 49px; }
.open .big { width: 64px; }
.select .tools { padding-left: 7px; }

.address { display: flex; height: 42px; padding: 5px 12px 7px 12px; flex: none; }
.arrows { display: flex; width: 94px; align-items: center; gap: 16px; }
.arrows .recent { margin-left: -3px; }
.arrows .up { margin-left: -6px; }
.path { display: flex; flex: 1; align-items: center; border: 1px solid #d9d9d9; padding-left: 4px; gap: 5px; min-width: 0; }
.ch { width: 11px; height: 11px; color: #777; }
.path .drop { margin-left: auto; width: 30px; justify-content: center; }
.path .refresh { width: 30px; height: 28px; justify-content: center; border-left: 1px solid #d9d9d9; margin-left: -5px; }
.search { width: 342px; margin-left: 12px; border: 1px solid #d9d9d9; padding-left: 14px; gap: 12px; }
input { border: 0; outline: 0; background: none; font: inherit; min-width: 0; flex: 1; padding: 0; }
input::placeholder { color: #737a77; opacity: 1; }

.body { display: flex; flex: 1; min-height: 0; }
.tree { width: 138px; overflow: hidden; }
.tree a { height: 24px; padding-left: 32px; gap: 5px; white-space: nowrap; width: 137px; overflow: hidden; }
.tree .root { margin-top: 8px; padding-left: 24px; }
.tree .current { background: #d9d9d9; }
.ic { width: 16px; height: 16px; }
.tree .tack { width: 10px; height: 10px; margin-left: auto; margin-right: 3px; }
.vscroll { width: 15px; display: flex; flex-direction: column; background: #f0f0f0; }
.vscroll button { height: 17px; justify-content: center; }
.vscroll i { flex: 1; margin-top: 60px; background: #cdcdcd; }
.content { flex: 1; min-width: 0; display: flex; flex-direction: column; padding-left: 5px; }
.files { display: grid; grid-template-columns: 439px 428px max-content; padding: 5px 0 0 5px; overflow: hidden; flex: 1; }
.files ul { list-style: none; margin: 0; padding: 0; }
.files li { display: flex; align-items: center; gap: 3px; height: 21px; white-space: nowrap; }
.files li svg { width: 14px; height: 16px; }
.hscroll { height: 16px; display: flex; background: #f0f0f0; }
.hscroll button { width: 17px; justify-content: center; }
.hscroll i { width: 147px; background: #cdcdcd; margin: 0 auto 0 29%; }
.status { display: flex; align-items: center; height: 23px; flex: none; padding: 0 8px 0 14px; color: #26384b; gap: 8px; }
.status i { height: 14px; width: 1px; background: #e7e7e7; margin-right: auto; }

.taskbar { display: flex; height: 39px; flex: none; background: linear-gradient(90deg, #213743, #203542 55%, #1b2a3b 80%); color: #fff; }
.start { width: 48px; justify-content: center; }
.task-search { width: 344px; background: #f1f1f1; border: 1px solid #c8cbcd; padding-left: 11px; gap: 10px; font: 14px/20px "Open Sans", "Noto Sans", sans-serif; }
.task-search input::placeholder { color: #333a40; }
.pinned { display: flex; gap: 8px; padding-left: 6px; }
.pinned button { width: 41px; height: 39px; justify-content: center; border-bottom: 2px solid #69afe1; }
.pinned .explorer { width: 48px; background: #496463; margin-left: -3px; }
.tray { display: flex; align-items: center; gap: 6px; margin-left: auto; }
.tray svg { width: 18px; height: 18px; }
time { width: 68px; display: flex; flex-direction: column; justify-content: center; text-align: center; line-height: 18px; }
.notice { width: 37px; justify-content: center; }
.peek { width: 1px; margin: 0 4px 0 10px; background: #6d6f78; }
```
